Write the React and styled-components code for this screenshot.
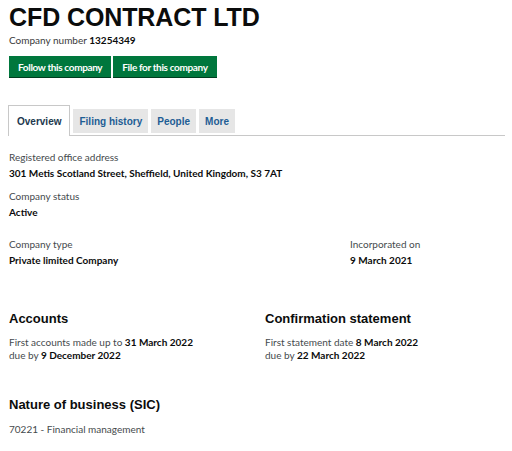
import { createGlobalStyle } from 'styled-components';
import styled from 'styled-components';

const GlobalStyle = createGlobalStyle`
  body {
    margin: 0;
    background: #ffffff;
    font-family: Lato, "Liberation Sans", Arial, sans-serif;
    color: #0b0c0c;
  }
`;

const Page = styled.div`
  padding: 3px 7px 0 9px;
`;

const Title = styled.h1`
  margin: 0;
  font-family: "Liberation Sans", Arial, sans-serif;
  font-size: 25px;
  font-weight: 700;
  line-height: 28px;
  letter-spacing: -0.1px;
`;

const CompanyNumber = styled.p`
  margin: 2px 0 0;
  font-size: 10px;
  line-height: 14px;
  color: #3a3a3a;

  strong {
    color: #0b0c0c;
  }
`;

const ButtonRow = styled.div`
  display: flex;
  gap: 2px;
  margin-top: 9px;
`;

const Button = styled.button`
  height: 21px;
  padding: 0 9px;
  border: none;
  background: #00773d;
  box-shadow: 0 1px 0 #003d1f;
  color: #ffffff;
  font-family: Lato, "Liberation Sans", Arial, sans-serif;
  font-size: 10px;
  font-weight: 700;
  letter-spacing: -0.35px;
  cursor: pointer;
`;

const TabList = styled.div`
  display: flex;
  align-items: flex-end;
  gap: 3px;
  margin: 28px 0 0 -1px;
  border-bottom: 1px solid #c8c8c8;
`;

const Tab = styled.div`
  display: flex;
  align-items: center;
  font-family: "Liberation Sans", Arial, sans-serif;
  font-size: 10px;
  font-weight: 700;
  ${(p) =>
    p.$active
      ? `
    height: 30px;
    margin-bottom: -1px;
    padding: 0 8px;
    background: #ffffff;
    border: 1px solid #c8c8c8;
    border-bottom: none;
    color: #22384e;
  `
      : `
    height: 24px;
    margin-bottom: 2px;
    padding: 0 6px;
    background: #e6e6e6;
    color: #1d5d94;
  `}
`;

const Section = styled.div`
  margin-top: ${(p) => p.$top || 0}px;
`;

const Label = styled.div`
  font-size: 10px;
  line-height: 14px;
  color: #454a4d;
`;

const Value = styled.div`
  margin-top: 2px;
  font-size: 10px;
  line-height: 14px;
  font-weight: 700;
  color: #0b0c0c;
`;

const TwoCol = styled.div`
  display: grid;
  grid-template-columns: ${(p) => p.$left}px 1fr;
  margin-top: ${(p) => p.$top || 0}px;
`;

const Heading = styled.h2`
  margin: 0;
  font-family: "Liberation Sans", Arial, sans-serif;
  font-size: 13px;
  font-weight: 700;
  line-height: 16px;
  color: #0b0c0c;
`;

const Line = styled.div`
  font-size: 10px;
  line-height: 13px;
  color: #454a4d;

  strong {
    color: #0b0c0c;
  }
`;

const Lines = styled.div`
  margin-top: ${(p) => p.$gap || 9}px;
`;

function Field({ label, value }) {
  return (
    <div>
      <Label>{label}</Label>
      <Value>{value}</Value>
    </div>
  );
}

export default function App() {
  return (
    <>
      <GlobalStyle />
      <Page>
        <Title>CFD CONTRACT LTD</Title>
        <CompanyNumber>
          Company number <strong>13254349</strong>
        </CompanyNumber>
        <ButtonRow>
          <Button>Follow this company</Button>
          <Button>File for this company</Button>
        </ButtonRow>

        <TabList>
          <Tab $active>Overview</Tab>
          <Tab>Filing history</Tab>
          <Tab>People</Tab>
          <Tab>More</Tab>
        </TabList>

        <Section $top={14}>
          <Field
            label="Registered office address"
            value="301 Metis Scotland Street, Sheffield, United Kingdom, S3 7AT"
          />
        </Section>
        <Section $top={9}>
          <Field label="Company status" value="Active" />
        </Section>

        <TwoCol $left={341} $top={18}>
          <Field label="Company type" value="Private limited Company" />
          <Field label="Incorporated on" value="9 March 2021" />
        </TwoCol>

        <TwoCol $left={256} $top={44}>
          <div>
            <Heading>Accounts</Heading>
            <Lines>
              <Line>
                First accounts made up to <strong>31 March 2022</strong>
              </Line>
              <Line>
                due by <strong>9 December 2022</strong>
              </Line>
            </Lines>
          </div>
          <div>
            <Heading>Confirmation statement</Heading>
            <Lines>
              <Line>
                First statement date <strong>8 March 2022</strong>
              </Line>
              <Line>
                due by <strong>22 March 2022</strong>
              </Line>
            </Lines>
          </div>
        </TwoCol>

        <Section $top={35}>
          <Heading>Nature of business (SIC)</Heading>
          <Lines $gap={10}>
            <Line>70221 - Financial management</Line>
          </Lines>
        </Section>
      </Page>
    </>
  );
}
